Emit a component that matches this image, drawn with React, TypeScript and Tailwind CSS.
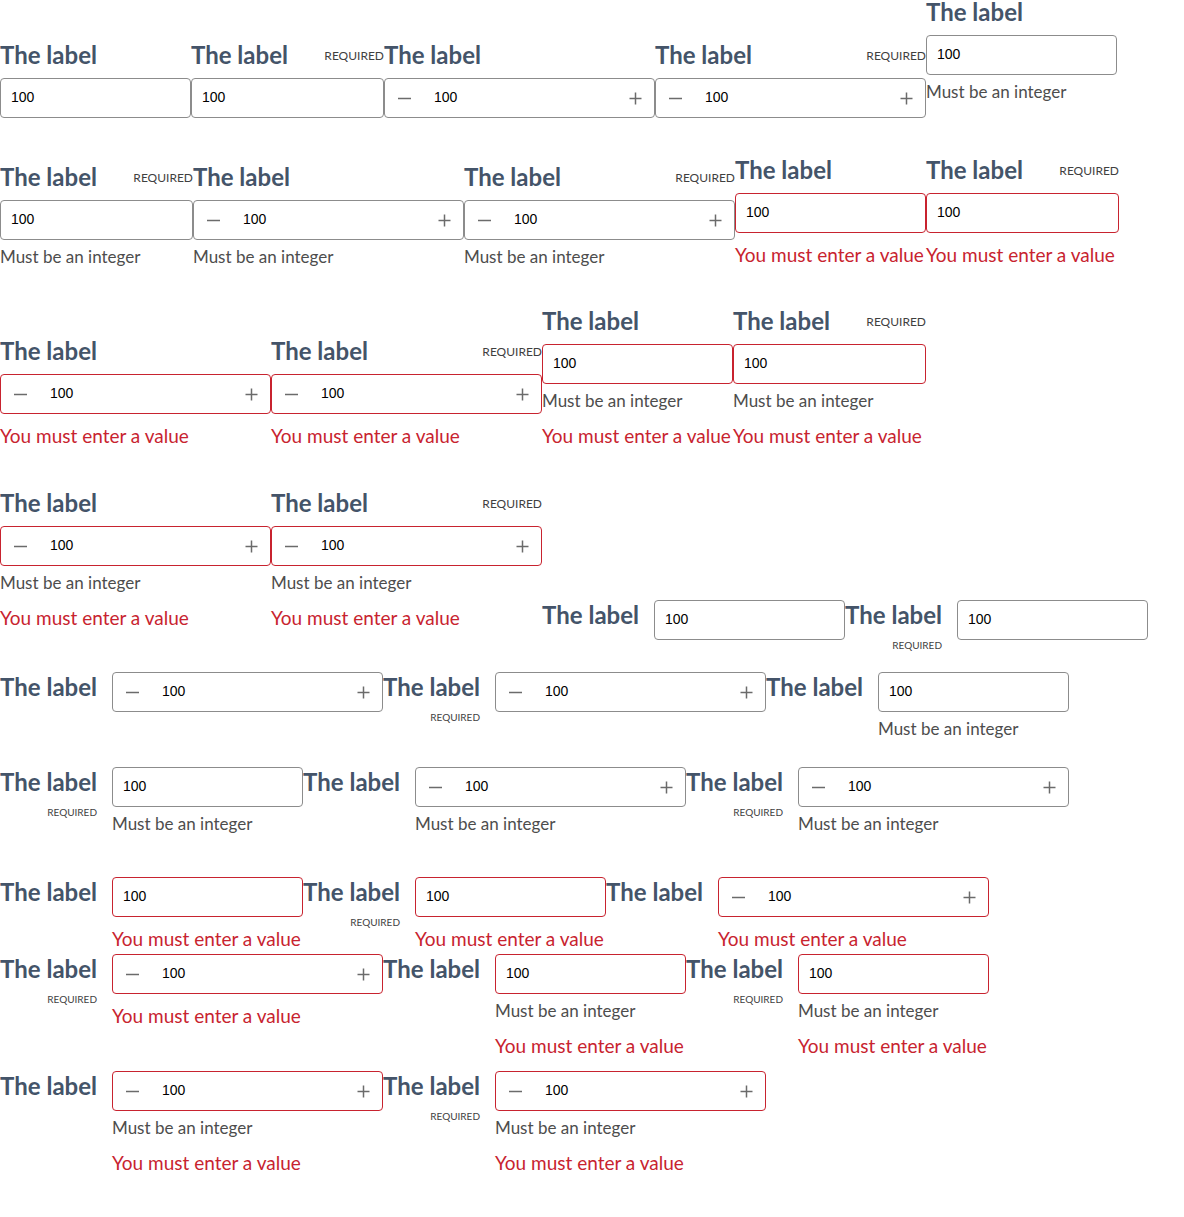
import React from "react";

const LBL =
  "whitespace-nowrap text-[24px] font-bold leading-[20px] text-[#445469] [font-family:Lato,sans-serif]";
const HELP =
  "whitespace-nowrap text-[17px] leading-[24px] text-[#4d4d4d] [font-family:Lato,sans-serif]";
const ERR =
  "whitespace-nowrap text-[19px] leading-[24px] text-[#c8232f] [font-family:Lato,sans-serif]";
const INPUT_TEXT =
  "text-[14px] text-black [font-family:'Liberation_Sans',Arial,sans-serif]";

type Kind = "text" | "stepper";

interface FieldProps {
  kind: Kind;
  required?: boolean;
  helper?: boolean;
  error?: boolean;
  invalid?: boolean;
  cls?: string;
}

function Minus() {
  return (
    <svg width="13" height="13" viewBox="0 0 13 13" className="shrink-0">
      <line x1="0" y1="6.5" x2="13" y2="6.5" stroke="#6b6b6b" strokeWidth="1.5" />
    </svg>
  );
}

function Plus() {
  return (
    <svg width="13" height="13" viewBox="0 0 13 13" className="shrink-0">
      <line x1="0.5" y1="6.5" x2="12.5" y2="6.5" stroke="#6b6b6b" strokeWidth="1.5" />
      <line x1="6.5" y1="0.5" x2="6.5" y2="12.5" stroke="#6b6b6b" strokeWidth="1.5" />
    </svg>
  );
}

function Box({ kind, invalid }: { kind: Kind; invalid?: boolean }) {
  const border = invalid ? "border-[#c8232f]" : "border-[#8c8c8c]";
  if (kind === "text") {
    return (
      <input
        type="text"
        defaultValue="100"
        className={`h-[40px] w-full rounded-[4px] border bg-white pb-[2px] pl-[10px] outline-none ${border} ${INPUT_TEXT}`}
      />
    );
  }
  return (
    <div
      className={`flex h-[40px] w-full items-center rounded-[4px] border bg-white pl-[13px] pr-[12px] ${border}`}
    >
      <Minus />
      <input
        type="text"
        defaultValue="100"
        className={`ml-[23px] min-w-0 flex-1 bg-transparent pb-[2px] outline-none ${INPUT_TEXT}`}
      />
      <Plus />
    </div>
  );
}

function Messages({ helper, error }: { helper?: boolean; error?: boolean }) {
  return (
    <>
      {helper && <span className={`mt-[5px] ${HELP}`}>Must be an integer</span>}
      {error && (
        <span className={`${helper ? "mt-[11px]" : "mt-[10px]"} ${ERR}`}>
          You must enter a value
        </span>
      )}
    </>
  );
}

function TopField({ kind, required, helper, error, invalid, cls = "" }: FieldProps) {
  const w = kind === "stepper" ? "w-[271px]" : required ? "w-[193px]" : "w-[191px]";
  return (
    <div className={`flex shrink-0 flex-col ${w} ${cls}`}>
      <div className="flex h-[20px] items-start justify-between">
        <span className={`mt-[2px] ${LBL}`}>The label</span>
        {required && (
          <span className="mt-[7px] text-[12px] leading-[12px] text-[#3f3f3f] [font-family:Lato,sans-serif]">
            REQUIRED
          </span>
        )}
      </div>
      <div className="mt-[15px]">
        <Box kind={kind} invalid={invalid} />
      </div>
      <Messages helper={helper} error={error} />
    </div>
  );
}

function SideField({ kind, required, helper, error, invalid, cls = "" }: FieldProps) {
  const w = kind === "stepper" ? "w-[271px]" : "w-[191px]";
  return (
    <div className={`flex shrink-0 gap-[15px] ${cls}`}>
      <div className="flex w-[97px] flex-col items-end">
        <span className={`mt-[5px] ${LBL}`}>The label</span>
        {required && (
          <span className="mt-[14px] text-[10px] leading-[12px] text-[#3f3f3f] [font-family:Lato,sans-serif]">
            REQUIRED
          </span>
        )}
      </div>
      <div className={`flex flex-col ${w}`}>
        <Box kind={kind} invalid={invalid} />
        <Messages helper={helper} error={error} />
      </div>
    </div>
  );
}

export default function App() {
  return (
    <div className="flex min-h-[1217px] w-[1184px] flex-col bg-white">
      {/* Row 1 */}
      <div className="flex h-[158px] items-start">
        <TopField kind="text" cls="mt-[43px]" />
        <TopField kind="text" required cls="mt-[43px]" />
        <TopField kind="stepper" cls="mt-[43px]" />
        <TopField kind="stepper" required cls="mt-[43px]" />
        <TopField kind="text" helper />
      </div>
      {/* Row 2 */}
      <div className="flex h-[151px] items-start">
        <TopField kind="text" required helper cls="mt-[7px]" />
        <TopField kind="stepper" helper cls="mt-[7px]" />
        <TopField kind="stepper" required helper cls="mt-[7px]" />
        <TopField kind="text" invalid error />
        <TopField kind="text" required invalid error />
      </div>
      {/* Row 3 */}
      <div className="flex h-[182px] items-start">
        <TopField kind="stepper" invalid error cls="mt-[30px]" />
        <TopField kind="stepper" required invalid error cls="mt-[30px]" />
        <TopField kind="text" invalid helper error />
        <TopField kind="text" required invalid helper error />
      </div>
      {/* Row 4 */}
      <div className="flex h-[181px] items-start">
        <TopField kind="stepper" invalid helper error />
        <TopField kind="stepper" required invalid helper error />
        <SideField kind="text" cls="mt-[109px]" />
        <SideField kind="text" required cls="mt-[109px]" />
      </div>
      {/* Row 5 */}
      <div className="flex h-[95px] items-start">
        <SideField kind="stepper" />
        <SideField kind="stepper" required />
        <SideField kind="text" helper />
      </div>
      {/* Row 6 */}
      <div className="flex h-[110px] items-start">
        <SideField kind="text" required helper />
        <SideField kind="stepper" helper />
        <SideField kind="stepper" required helper />
      </div>
      {/* Row 7 */}
      <div className="flex h-[77px] items-start">
        <SideField kind="text" invalid error />
        <SideField kind="text" required invalid error />
        <SideField kind="stepper" invalid error />
      </div>
      {/* Row 8 */}
      <div className="flex h-[117px] items-start">
        <SideField kind="stepper" required invalid error />
        <SideField kind="text" invalid helper error />
        <SideField kind="text" required invalid helper error />
      </div>
      {/* Row 9 */}
      <div className="flex items-start">
        <SideField kind="stepper" invalid helper error />
        <SideField kind="stepper" required invalid helper error />
      </div>
    </div>
  );
}
